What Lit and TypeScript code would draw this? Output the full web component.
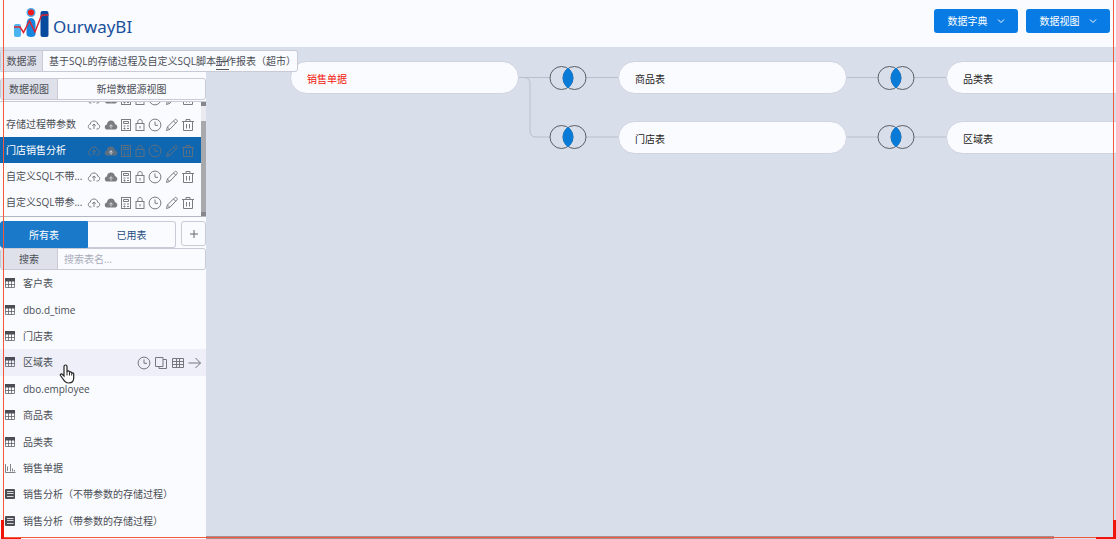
import { LitElement, html, css, svg } from "lit";
import { customElement, property, state } from "lit/decorators.js";
import { classMap } from "lit/directives/class-map.js";

const glyphs: Record<string, unknown> = {
  upload: svg`<path d="M4.500 11H3.800C2 11 1.300 9.900 1.300 8.600 1.300 7.300 2 6.500 3.200 6.300 3.500 4 5 3 7 3c2 0 3.400 1.200 3.700 3.200 1.200.2 2 1.100 2 2.300 0 1.500-1 2.500-2.500 2.500H9.500M7 11V6M5.200 7.700 7 6l1.800 1.700" />`,
  cloud: svg`<path class="solid" d="M3.500 11.500C1.600 11.500.8 10.300.8 8.900.8 7.500 1.700 6.600 2.900 6.400 3.200 4 4.800 2.500 7 2.500s3.700 1.500 4 3.700c1.400.2 2.300 1.300 2.300 2.700 0 1.500-1.100 2.600-2.600 2.600z"/><path class="cut" d="M7 10.500V7M5.300 8.500 7 6.700l1.700 1.800"/>`,
  calc: svg`<rect x="2.500" y="1.500" width="9" height="11"/><path d="M4.500 3.500h5v2h-5zM4.500 8h2M8 8h2M4.500 10.500h2M5.500 9.500v2M8 10.500h2"/>`,
  lock: svg`<rect x="3" y="5.500" width="8" height="7"/><path d="M4.800 5.500V3.500c0-1.200.9-2 2.200-2s2.200.8 2.200 2v2M7 8v2.500"/>`,
  clock: svg`<circle cx="7" cy="7" r="5.900"/><path d="M7 3.500V7.300H10"/>`,
  pencil: svg`<path d="M1.500 12.500 2.400 9 9.700 1.700c.7-.6 1.400-.4 2 .2s.8 1.300.2 2L4.800 11.400zM8.500 3l2.300 2.300M2.400 9l2.400 2.400"/>`,
  trash: svg`<path d="M1 3.500h12M5 3.500v-2h4v2M2.500 3.500v9h9v-9M5.500 6v4.500M8.500 6v4.500"/>`,
  copy: svg`<path d="M1.500 1.500h7.500v9H1.500zM9 3.500h3.500v9H5v-2"/>`,
  grid: svg`<path d="M1.500 2.500h11v9h-11zM1.500 5.500h11M1.500 8.500h11M5.500 2.500v9M8.500 2.500v9"/>`,
  arrow: svg`<path d="M.5 7h12M7.500 2l5 5-5 5"/>`,
  plus: svg`<path d="M7 3v8M3 7h8"/>`,
  chevron: svg`<path d="M4 5.500 7 8.500l3-3"/>`,
  table: svg`<path class="thin" d="M2.500 2.500h9v9h-9zM2.500 8.500h9M5.500 5v6.500M8.500 5v6.500"/><path class="solid" d="M2 2h10v3.500H2z"/>`,
  chart: svg`<path class="thin" d="M2.500 3v8.500h10M4.500 10V5.500M7.500 10.500V3M9.500 10.500V7.500M11.500 10.500V9"/>`,
  proc: svg`<rect class="solid" x="2" y="2" width="10" height="10" rx="1"/><path class="cut" d="M4 4.500h6.500M4 6.500h6.500M4 9.500h6.500"/>`,
};

@customElement("ui-icon")
class UiIcon extends LitElement {
  @property() name = "";
  static styles = css`
    :host { display: inline-flex; }
    svg { width: 14px; height: 14px; fill: none; stroke: currentColor; stroke-width: 1; }
    .solid { fill: currentColor; stroke: none; }
    .thin { opacity: 0.7; }
    .cut { stroke: #d5d7dc; }
  `;
  render() {
    return html`<svg viewBox="0 0 14 14" aria-hidden="true">${glyphs[this.name]}</svg>`;
  }
}

const rowTools = [
  ["upload", "上传"], ["cloud", "发布"], ["calc", "计算"], ["lock", "锁定"],
  ["clock", "定时"], ["pencil", "编辑"], ["trash", "删除"],
];
const hoverTools = [["clock", "定时"], ["copy", "复制"], ["grid", "预览"], ["arrow", "打开"]];
const views = ["", "存储过程带参数", "门店销售分析", "自定义SQL不带...", "自定义SQL带参..."];
const tables = [
  ["table", "客户表"], ["table", "dbo.d_time"], ["table", "门店表"], ["table", "区域表"],
  ["table", "dbo.employee"], ["table", "商品表"], ["table", "品类表"], ["chart", "销售单据"],
  ["proc", "销售分析（不带参数的存储过程）"], ["proc", "销售分析（带参数的存储过程）"],
];
const nodes = [
  { name: "销售单据", x: 84, y: 14, root: true },
  { name: "商品表", x: 412, y: 14 },
  { name: "品类表", x: 740, y: 14 },
  { name: "门店表", x: 412, y: 74 },
  { name: "区域表", x: 740, y: 74 },
];
const joins = [[362, 31], [690, 31], [362, 90], [690, 90]];

@customElement("app-root")
class AppRoot extends LitElement {
  @state() selected = 2;
  @state() hovered = 3;

  static styles = css`
    :host {
      display: flex; flex-direction: column; position: relative; height: 100vh; overflow: hidden;
      background: #d9dfea; color: #4b4e55;
      font: 10px/16px "Open Sans", "Noto Sans CJK SC", sans-serif;
    }
    * { box-sizing: border-box; }
    button, input { font: inherit; color: inherit; margin: 0; padding: 0; border: 0; background: none; }
    button { cursor: pointer; display: flex; align-items: center; justify-content: center; }
    ul { list-style: none; margin: 0; padding: 0; }
    header { flex: none; height: 47px; display: flex; align-items: center; padding: 0 6px 5px 13px; background: #fafbff; }
    .brand { display: flex; align-items: center; flex: 1; gap: 4px; color: #17509c; }
    .brand svg { width: 36px; height: 32px; }
    .brand span { font-family: "Noto Sans", sans-serif; font-size: 17px; line-height: 24px; padding-top: 12px; }
    .menus { display: flex; gap: 8px; }
    .menus button { width: 84px; height: 24px; gap: 6px; border-radius: 3px; background: #087be4; color: #fff; padding-left: 3px; }
    main { flex: 1; display: flex; min-height: 0; }
    aside { width: 206px; flex: none; display: flex; flex-direction: column; position: relative; z-index: 1; padding-top: 3px; }
    .field { display: flex; align-items: stretch; height: 22px; border: 1px solid #c8cbd5; border-radius: 3px; background: #fafbff; flex: none; }
    .field > :first-child { display: flex; align-items: center; justify-content: center; background: #dfe1ea; border-right: 1px solid #c8cbd5; flex: none; }
    .source { width: 298px; }
    .source > :first-child { width: 42px; }
    .source input { flex: 1; min-width: 0; padding-left: 6px; }
    .panel { flex: 1; min-height: 0; display: flex; flex-direction: column; background: #fafbff; padding-top: 6px; }
    .views > :first-child, .search > :first-child { width: 57px; }
    .views button { flex: 1; }
    .search input { flex: 1; min-width: 0; padding-left: 6px; }
    .search input::placeholder { color: #a9acba; opacity: 1; }
    .viewbox { height: 116px; flex: none; margin-top: 1px; display: flex; border-top: 1px solid #c8cbd5; border-bottom: 1px solid #b4b7c0; overflow: hidden; }
    .viewlist { flex: 1; display: flex; flex-direction: column; justify-content: flex-end; overflow: hidden; padding-bottom: 1px; }
    .view { height: 26px; flex: none; display: flex; align-items: center; padding-left: 6px; }
    .view > button:first-child { width: 80px; justify-content: flex-start; white-space: nowrap; }
    .tools { display: grid; grid-template-columns: 16px 17px 14px 13px 17px 17px 16px; color: #7a7c80; padding-top: 2px; }
    .view.on { background: #0f67b1; color: #fff; }
    .view.on .tools { color: #5e6f80; }
    .bar { width: 5px; flex: none; background: #e9ebf1; display: flex; flex-direction: column; justify-content: space-between; }
    .bar i { height: 4px; background: #85878c; }
    .bar b { flex: 1; margin-top: 15px; background: #a8a9ad; }
    .tabs { display: flex; margin-top: 4px; height: 27px; flex: none; }
    .tabs button { width: 88px; border: 1px solid #c8cbd5; color: #1c4d80; }
    .tabs .on { background: #1b79c9; border-color: #1b79c9; color: #fff; border-radius: 3px 0 0 3px; }
    .tabs .used { border-radius: 0 3px 3px 0; border-left: 0; }
    .tabs .add { width: 25px; margin-left: 5px; border-radius: 3px; color: #666; height: 25px; }
    .tables { flex: 1; min-height: 0; display: grid; grid-auto-rows: 1fr; padding-bottom: 5px; }
    .row { display: flex; align-items: center; gap: 6px; padding-left: 3px; min-height: 0; }
    .row .name { flex: 1; justify-content: flex-start; white-space: nowrap; }
    .row.on { background: #eeeff8; }
    .hover { display: flex; gap: 3px; padding-right: 4px; color: #75777c; padding-top: 2px; }
    .canvas { flex: 1; min-width: 0; position: relative; overflow: hidden; }
    .lines { position: absolute; left: 0; top: 0; width: 1000px; height: 160px; }
    .node { position: absolute; width: 229px; height: 33px; border-radius: 17px; padding: 2px 16px 0; justify-content: flex-start; background: #fafbff; border: 1px solid #d0d3e0; color: #222; }
    .node.root { color: #f0180c; }
    .hscroll { position: absolute; left: 0; right: 62px; bottom: 0; height: 3px; background: #a58f92; }
    .over { position: absolute; pointer-events: none; z-index: 3; }
    .frame { inset: 0 2px 1px 3px; border: 1px solid #f4583c; border-top: 0; }
    .corner { width: 20px; height: 19px; bottom: 0; border: 3px solid #f01408; border-top: 0; border-bottom-width: 1px; }
    .corner.l { left: 1px; border-right: 0; }
    .corner.r { right: 0; border-left: 0; border-bottom-width: 2px; }
    .handle { left: 216px; top: 60px; width: 13px; height: 11px; }
    .hand { left: 59px; top: 364px; width: 16px; height: 20px; }
  `;

  render() {
    return html`
      <header>
        <div class="brand">
          <svg viewBox="0 0 36 32" aria-hidden="true">
            <rect x="1" y="19" width="7" height="13" rx="2" fill="#4db4f2"/>
            <path d="M13.500 20q0-7 4.500-7t4.500 7v9q0 3-4.500 3t-4.500-3z" fill="#1685df"/>
            <circle cx="18" cy="7.500" r="4.500" fill="#4da6e8"/><circle cx="18" cy="7.500" r="3" fill="#f01718"/>
            <rect x="27.500" y="6" width="8" height="26" rx="2" fill="#084b9e"/>
            <path d="M1 22h6l3.500 5.500L16.500 16 22 27l6-15.500q.6-1.500 2-1.500h5.500" fill="none" stroke="#dc2430" stroke-width="1.500"/>
          </svg>
          <span>OurwayBI</span>
        </div>
        <nav class="menus">
          <button>数据字典<ui-icon name="chevron"></ui-icon></button>
          <button>数据视图<ui-icon name="chevron"></ui-icon></button>
        </nav>
      </header>
      <main>
        <aside>
          <div class="field source">
            <label for="source">数据源</label>
            <input id="source" .value=${"基于SQL的存储过程及自定义SQL脚本制作报表（超市）"} />
          </div>
          <div class="panel">
            <div class="field views"><span>数据视图</span><button>新增数据源视图</button></div>
            <div class="viewbox">
              <ul class="viewlist">
                ${views.map((v, i) => html`
                  <li class=${classMap({ view: true, on: i === this.selected })}>
                    <button @click=${() => (this.selected = i)}>${v}</button>
                    <div class="tools">${rowTools.map(([n, t]) => html`<button aria-label=${t}><ui-icon name=${n}></ui-icon></button>`)}</div>
                  </li>`)}
              </ul>
              <div class="bar"><i></i><b></b><i></i></div>
            </div>
            <div class="tabs">
              <button class="on">所有表</button><button class="used">已用表</button>
              <button class="add" aria-label="添加"><ui-icon name="plus"></ui-icon></button>
            </div>
            <div class="field search">
              <label for="search">搜索</label><input id="search" placeholder="搜索表名..." />
            </div>
            <ul class="tables">
              ${tables.map(([icon, name], i) => html`
                <li class=${classMap({ row: true, on: i === this.hovered })} @mouseenter=${() => (this.hovered = i)}>
                  <ui-icon name=${icon}></ui-icon><button class="name">${name}</button>
                  ${i === this.hovered
                    ? html`<div class="hover">${hoverTools.map(([n, t]) => html`<button aria-label=${t}><ui-icon name=${n}></ui-icon></button>`)}</div>`
                    : ""}
                </li>`)}
            </ul>
          </div>
        </aside>
        <section class="canvas">
          <svg class="lines" viewBox="0 0 1000 160" aria-hidden="true">
            <path d="M312 30.500H740M318 30.500q6 0 6 6V84q0 6 6 6H740" fill="none" stroke="#b9c0cb"/>
            ${joins.map(([x, y]) => svg`
              <g transform="translate(${x} ${y})">
                <circle cx="-6.500" r="11.500" fill="#d9dfea"/><circle cx="6.500" r="11.500" fill="#d9dfea"/>
                <circle cx="-6.500" r="11.500" fill="none" stroke="#5b5e64"/><circle cx="6.500" r="11.500" fill="none" stroke="#5b5e64"/>
                <path d="M0-10C6.500-4.500 6.500 4.500 0 10-6.500 4.500-6.500-4.500 0-10z" fill="#087bd8" stroke="#087bd8" stroke-width=".8"/>
              </g>`)}
          </svg>
          ${nodes.map((n) => html`<button class=${classMap({ node: true, root: !!n.root })} style="left:${n.x}px;top:${n.y}px">${n.name}</button>`)}
          <div class="hscroll"></div>
        </section>
      </main>
      <svg class="over handle" viewBox="0 0 13 11" aria-hidden="true"><path d="M0 1.500h12M0 5.500h6M0 9.500h13" stroke="#55585e"/></svg>
      <svg class="over hand" viewBox="0 0 16 20" aria-hidden="true">
        <path d="M5 12V2.500C5 .5 8 .5 8 2.500V8c0-1.500 2.500-1.500 2.500 0v.7c0-1.300 2.200-1.200 2.200.2v.6c0-1 2-.9 2 .4V14c0 3-2 5-5 5-3.200 0-4.200-1.500-5.700-4L1.500 11.500C.8 10 2.500 9.300 3.500 10.500z" fill="#fff" stroke="#222" stroke-width="1.200"/>
        <path d="M8 8v3.500M10.500 8.700v2.800M12.700 9.500v2" stroke="#222" fill="none"/>
      </svg>
      <div class="over frame"></div>
      <div class="over corner l"></div>
      <div class="over corner r"></div>
    `;
  }
}
